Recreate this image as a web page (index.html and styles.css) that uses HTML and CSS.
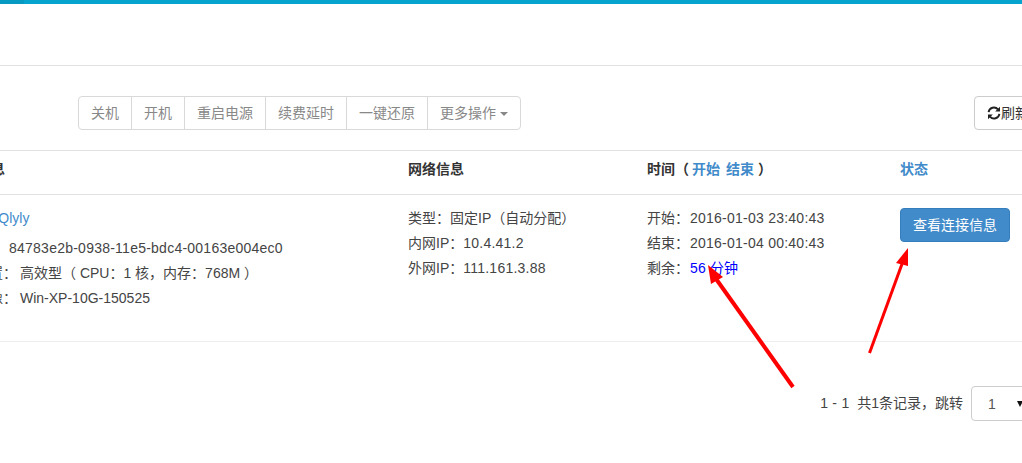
FILE: index.html
```html
<!DOCTYPE html>
<html lang="zh-CN">
<head>
<meta charset="utf-8">
<title>实例列表</title>
<link rel="stylesheet" href="styles.css">
</head>
<body>
<div class="topbar"><div class="topbar-left"></div></div>
<div class="page">
  <div class="heading"></div>
  <div class="toolbar">
    <div class="btn-group">
      <button class="btn" type="button">关机</button>
      <button class="btn" type="button">开机</button>
      <button class="btn" type="button">重启电源</button>
      <button class="btn" type="button">续费延时</button>
      <button class="btn" type="button">一键还原</button>
      <button class="btn" type="button">更多操作 <span class="caret"></span></button>
    </div>
    <button class="refresh" type="button">
      <svg class="refresh-icon" viewBox="0 0 14 14" aria-hidden="true"><path d="M1.600 6.200A5.400 5.400 0 0 1 11 3.300" fill="none" stroke="#222" stroke-width="1.900"/><path d="M13 0.800V5.600H8.200Z" fill="#222"/><path d="M12.400 7.800A5.400 5.400 0 0 1 3 10.700" fill="none" stroke="#222" stroke-width="1.900"/><path d="M1 13.200V8.400H5.800Z" fill="#222"/></svg>刷新
    </button>
  </div>
  <div class="table">
    <div class="row head">
      <div class="cell first">信息</div>
      <div class="cell">网络信息</div>
      <div class="cell">时间（<a class="link sort" href="#">开始</a> <a class="link sort-end" href="#">结束</a>）</div>
      <div class="cell"><a class="link" href="#">状态</a></div>
    </div>
    <div class="row body">
      <div class="cell">
        <p class="line name"><a class="link" href="#">vm-Qlyly</a></p>
        <p class="line">ID：<span class="val id">84783e2b-0938-11e5-bdc4-00163e004ec0</span></p>
        <p class="line">配置：<span class="gap">高效型（ CPU：1 核，内存：768M ）</span></p>
        <p class="line">镜像：<span class="gap">Win-XP-10G-150525</span></p>
      </div>
      <div class="cell">
        <p class="line">类型：固定IP（自动分配）</p>
        <p class="line">内网IP：<span class="val">10.4.41.2</span></p>
        <p class="line">外网IP：<span class="val">111.161.3.88</span></p>
      </div>
      <div class="cell">
        <p class="line">开始：<span class="val date">2016-01-03 23:40:43</span></p>
        <p class="line">结束：<span class="val date">2016-01-04 00:40:43</span></p>
        <p class="line">剩余：<span class="remain"><span class="val date">56</span> 分钟</span></p>
      </div>
      <div class="cell"><button class="btn-primary" type="button">查看连接信息</button></div>
    </div>
  </div>
  <div class="pager">
    <span class="pager-text"><span class="val">1 - 1</span>&nbsp;&nbsp;共1条记录，跳转</span>
    <div class="select">1<span class="select-arrow"></span></div>
  </div>
</div>
<svg class="arrows" viewBox="0 0 1022 463" aria-hidden="true">
  <path d="M793 387L714 276" stroke="#f00" stroke-width="4" fill="none"/>
  <path d="M708 265L723 277L711 284Z" fill="#f00"/>
  <path d="M869.500 353L902 264" stroke="#f00" stroke-width="3" fill="none"/>
  <path d="M908 248L908 266L896 263Z" fill="#f00"/>
</svg>
</body>
</html>
```
FILE: styles.css
```css
* { box-sizing: border-box; }
html, body { margin: 0; height: 100%; }
body {
  position: relative;
  overflow: hidden;
  background: #fff;
  color: #444;
  font-family: "Liberation Sans", "Noto Sans CJK SC", sans-serif;
  font-size: 14px;
  line-height: 20px;
}
.topbar { height: 4px; background: #05a4cf; }
.topbar-left { width: 24px; height: 4px; background: #0699c2; }
.page { width: 1150px; margin-left: -25px; }
.heading { height: 62px; border-bottom: 1px solid #e2e2e2; }
.toolbar {
  display: flex;
  justify-content: space-between;
  align-items: flex-start;
  height: 84px;
  padding: 30px 0 0 103px;
}
.btn-group { display: flex; height: 34px; }
.btn {
  height: 34px;
  margin: 0 0 0 -1px;
  padding: 0 12px;
  border: 1px solid #d9d9d9;
  background: #fff;
  color: #888;
  font: inherit;
}
.btn:first-child { margin-left: 0; border-radius: 4px 0 0 4px; }
.btn:last-child { border-radius: 0 4px 4px 0; }
.caret {
  display: inline-block;
  width: 0;
  height: 0;
  vertical-align: middle;
  border-top: 4px solid #888;
  border-left: 4px solid transparent;
  border-right: 4px solid transparent;
}
.refresh {
  display: flex;
  align-items: center;
  height: 34px;
  width: 148px;
  margin-right: 3px;
  padding: 0 12px;
  border: 1px solid #ccc;
  border-radius: 4px;
  background: #fff;
  color: #333;
  font: inherit;
}
.refresh-icon { width: 14px; height: 14px; flex: none; }
.table { border-top: 1px solid #e2e2e2; }
.row { display: grid; grid-template-columns: 425px 239px 253px 1fr; }
.row.head { height: 44px; border-bottom: 1px solid #e2e2e2; font-weight: 700; color: #333; }
.row.head .cell { padding: 8px 8px 0; }
.row.body { height: 147px; border-bottom: 1px solid #eee; }
.row.body .cell { padding: 13px 8px 0; }
.row.body .cell:first-child { padding-left: 0; }
.row.head .cell.first { padding-left: 2px; }
.line { margin: 0 0 5px; }
.name { margin-bottom: 10px; }
.link { color: #428bca; text-decoration: none; }
.sort { margin-left: 3px; }
.sort-end { margin: 0 4px 0 2px; }
.val { letter-spacing: .24px; }
.id { margin-left: 6px; }
.gap { margin-left: 3px; }
.date { margin-left: 1px; }
.remain { color: #00f; }
.btn-primary {
  height: 34px;
  padding: 0 12px;
  border: 1px solid #357ebd;
  border-radius: 4px;
  background: #428bca;
  color: #fff;
  font: inherit;
}
.pager {
  display: flex;
  justify-content: flex-end;
  align-items: center;
  gap: 8px;
  width: 1150px;
  margin-top: 44px;
  padding-right: 3px;
}
.pager-text { padding-bottom: 2px; }
.select {
  position: relative;
  width: 151px;
  height: 35px;
  padding: 7px 16px;
  border: 1px solid #ccc;
  border-radius: 4px;
  color: #555;
}
.select-arrow {
  position: absolute;
  left: 45px;
  top: 14px;
  border-top: 6px solid #111;
  border-left: 3.500px solid transparent;
  border-right: 3.500px solid transparent;
}
.arrows { position: absolute; left: 0; top: 0; width: 1022px; height: 463px; pointer-events: none; }
```
